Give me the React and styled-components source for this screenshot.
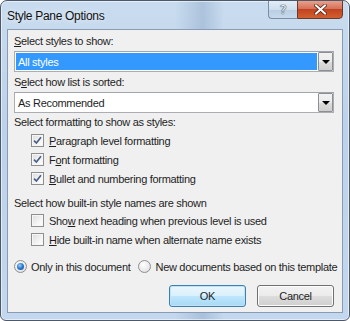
import React from 'react'
import styled, { createGlobalStyle } from 'styled-components'

const GlobalStyle = createGlobalStyle`
    html, body {
        margin: 0;
        padding: 0;
        background: #ffffff;
    }
    body {
        font-family: "Liberation Sans", Arial, sans-serif;
        font-size: 11px;
        letter-spacing: -0.3px;
        color: #1e1e1e;
    }
`

const Frame = styled.div`
    width: 350px;
    height: 321px;
    box-sizing: border-box;
    border: 1px solid #4d5868;
    border-radius: 7px 7px 6px 6px;
    background:
        linear-gradient(90deg, rgba(255,255,255,0) 0%, rgba(255,255,255,0) 50%, rgba(120,150,185,0.35) 58%, rgba(255,255,255,0) 64%, rgba(255,255,255,0) 100%),
        linear-gradient(180deg, #c9dcef 0%, #bcd2ea 40%, #c3d8ee 100%);
    box-shadow: inset 0 0 0 1px rgba(255,255,255,0.55);
    display: flex;
    flex-direction: column;
    overflow: hidden;
`

const TitleBar = styled.div`
    height: 28px;
    display: flex;
    align-items: flex-start;
    padding: 0 6px 0 6px;
`

const Caption = styled.div`
    font-family: "Liberation Sans", Arial, sans-serif;
    font-size: 12px;
    letter-spacing: -0.3px;
    color: #111;
    margin-top: 8px;
    text-shadow: 0 0 6px rgba(255,255,255,0.9);
`

const CaptionButtons = styled.div`
    margin-left: auto;
    display: flex;
    margin-top: -1px;
`

const HelpButton = styled.div`
    width: 29px;
    height: 19px;
    box-sizing: border-box;
    border: 1px solid #7a8ea6;
    border-right: none;
    border-radius: 0 0 0 4px;
    background: linear-gradient(180deg, #e3edf7 0%, #cfdeee 50%, #b9cde3 51%, #c8d9eb 100%);
    display: flex;
    align-items: center;
    justify-content: center;
    font-family: "DejaVu Sans", sans-serif;
    font-size: 13px;
    color: #eef4fa;
    text-shadow: 0 0 1px #3c4d63, 0 0 1px #3c4d63, 0 0 1px #3c4d63;
`

const CloseButton = styled.div`
    width: 46px;
    height: 19px;
    box-sizing: border-box;
    border: 1px solid #6b3a2f;
    border-radius: 0 0 4px 0;
    background: linear-gradient(180deg, #e8a08a 0%, #d6715a 45%, #c2431f 50%, #d2602f 100%);
    display: flex;
    align-items: center;
    justify-content: center;
`

const Client = styled.div`
    margin: 0 6px 0 6px;
    height: 284px;
    box-sizing: border-box;
    border: 1px solid #8a9cb3;
    background: #f0f0f0;
    padding: 4px 8px 0 6px;
    display: flex;
    flex-direction: column;
`

const Label = styled.div`
    line-height: 15px;
    height: 15px;
    white-space: nowrap;
    margin-top: ${p => p.$top || 0}px;
`

const Key = styled.span`
    text-decoration: underline;
    text-underline-offset: 1px;
`

const Combo = styled.div`
    margin-top: 2px;
    height: 21px;
    box-sizing: border-box;
    border: 1px solid #abadb3;
    border-top-color: #a0a4ab;
    background: #fff;
    display: flex;
    align-items: stretch;
    padding: 1px;
`

const ComboValue = styled.div`
    flex: 1;
    display: flex;
    align-items: center;
    padding-left: 2px;
    background: ${p => (p.$selected ? '#3399ff' : 'transparent')};
    color: ${p => (p.$selected ? '#ffffff' : '#1e1e1e')};
    margin-right: 1px;
`

const DropButton = styled.div`
    width: 15px;
    box-sizing: border-box;
    margin: -1px -1px -1px 0;
    border: 1px solid #8c8f95;
    border-radius: 1px;
    background: linear-gradient(180deg, #f2f2f2 0%, #ebebeb 50%, #dddddd 51%, #cfcfcf 100%);
    display: flex;
    align-items: center;
    justify-content: center;
`

const Arrow = styled.div`
    width: 0;
    height: 0;
    border-left: 4px solid transparent;
    border-right: 4px solid transparent;
    border-top: 4px solid #000;
    margin-top: 1px;
`

const OptionList = styled.div`
    display: flex;
    flex-direction: column;
    padding-left: 17px;
    margin-top: ${p => p.$top || 0}px;
`

const OptionRow = styled.label`
    height: 19px;
    display: flex;
    align-items: center;
    gap: 5px;
    white-space: nowrap;
`

const Box = styled.span`
    width: 13px;
    height: 13px;
    box-sizing: border-box;
    border: 1px solid #8e8f8f;
    background: linear-gradient(135deg, #dcdcdc 0%, #f4f4f4 60%, #ffffff 100%);
    box-shadow: inset 0 0 0 1px #f6f6f6;
    display: flex;
    align-items: center;
    justify-content: center;
    flex-shrink: 0;
`

const RadioRow = styled.div`
    margin-top: 9px;
    height: 17px;
    display: flex;
    align-items: center;
`

const RadioItem = styled.label`
    display: flex;
    align-items: center;
    gap: 4px;
    white-space: nowrap;
    margin-right: ${p => p.$gap || 0}px;
`

const RadioCircle = styled.span`
    width: 13px;
    height: 13px;
    box-sizing: border-box;
    border-radius: 50%;
    border: 1px solid #8e8f8f;
    background: radial-gradient(circle at 40% 35%, #ffffff 0%, #eaeaea 60%, #d3d3d3 100%);
    display: flex;
    align-items: center;
    justify-content: center;
    flex-shrink: 0;
`

const RadioDot = styled.span`
    width: 7px;
    height: 7px;
    border-radius: 50%;
    background: radial-gradient(circle at 40% 35%, #9fd0ff 0%, #2f7fd6 45%, #0c3f8c 100%);
`

const ButtonRow = styled.div`
    margin-top: 10px;
    display: flex;
    justify-content: flex-end;
    gap: 11px;
`

const Button = styled.div`
    width: 77px;
    height: 22px;
    box-sizing: border-box;
    border: 1px solid ${p => (p.$default ? '#3c7fb1' : '#707070')};
    border-radius: 3px;
    background: ${p => (p.$default
        ? 'linear-gradient(180deg, #eaf6fd 0%, #d9f0fc 50%, #bee6fd 51%, #a7d9f5 100%)'
        : 'linear-gradient(180deg, #f2f2f2 0%, #ebebeb 50%, #dddddd 51%, #cfcfcf 100%)')};
    box-shadow: inset 0 0 0 1px ${p => (p.$default ? '#bfe4f8' : '#fcfcfc')};
    display: flex;
    align-items: center;
    justify-content: center;
`

const Check = () => (
    <svg width="9" height="9" viewBox="0 0 9 9">
        <path d="M1 4.6 L3.4 7 L8 1.2" fill="none" stroke="#4a5f86" strokeWidth="1.6" />
    </svg>
)

const CloseX = () => (
    <svg width="13" height="11" viewBox="0 0 13 11">
        <path d="M2 1.5 L11 9.5 M11 1.5 L2 9.5" stroke="#5a2418" strokeWidth="3.6" strokeLinecap="square" />
        <path d="M2 1.5 L11 9.5 M11 1.5 L2 9.5" stroke="#ffffff" strokeWidth="2" strokeLinecap="square" />
    </svg>
)

const formatting = [
    [<Key>P</Key>, 'aragraph level formatting'],
    ['F', <Key>o</Key>, 'nt formatting'],
    [<Key>B</Key>, 'ullet and numbering formatting'],
]

export default function App() {
    return (
        <>
            <GlobalStyle />
            <Frame>
                <TitleBar>
                    <Caption>Style Pane Options</Caption>
                    <CaptionButtons>
                        <HelpButton>?</HelpButton>
                        <CloseButton><CloseX /></CloseButton>
                    </CaptionButtons>
                </TitleBar>
                <Client>
                    <Label><Key>S</Key>elect styles to show:</Label>
                    <Combo>
                        <ComboValue $selected>All styles</ComboValue>
                        <DropButton><Arrow /></DropButton>
                    </Combo>
                    <Label $top={3}>S<Key>e</Key>lect how list is sorted:</Label>
                    <Combo>
                        <ComboValue>As Recommended</ComboValue>
                        <DropButton><Arrow /></DropButton>
                    </Combo>
                    <Label $top={2}>Select formatting to show as styles:</Label>
                    <OptionList $top={1}>
                        {formatting.map((parts, i) => (
                            <OptionRow key={i}>
                                <Box><Check /></Box>
                                <span>{parts.map((p, j) => <React.Fragment key={j}>{p}</React.Fragment>)}</span>
                            </OptionRow>
                        ))}
                    </OptionList>
                    <Label $top={8}>Select how built-in style names are shown</Label>
                    <OptionList $top={0}>
                        <OptionRow>
                            <Box />
                            <span>Sho<Key>w</Key> next heading when previous level is used</span>
                        </OptionRow>
                        <OptionRow>
                            <Box />
                            <span><Key>H</Key>ide built-in name when alternate name exists</span>
                        </OptionRow>
                    </OptionList>
                    <RadioRow>
                        <RadioItem $gap={8}>
                            <RadioCircle><RadioDot /></RadioCircle>
                            Only in this document
                        </RadioItem>
                        <RadioItem>
                            <RadioCircle />
                            New documents based on this template
                        </RadioItem>
                    </RadioRow>
                    <ButtonRow>
                        <Button $default>OK</Button>
                        <Button>Cancel</Button>
                    </ButtonRow>
                </Client>
            </Frame>
        </>
    )
}
